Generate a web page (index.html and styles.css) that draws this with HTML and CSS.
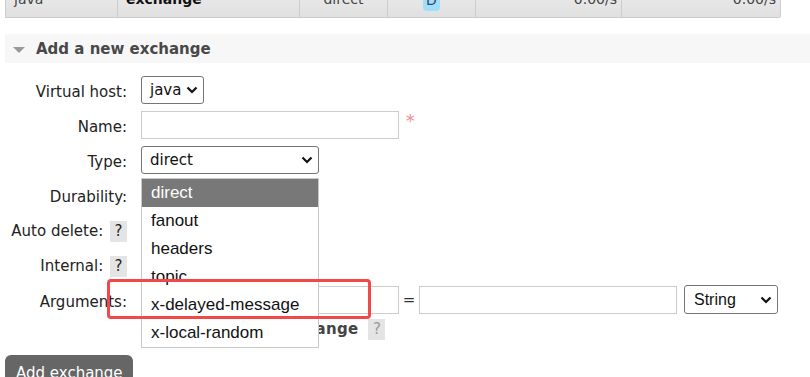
FILE: index.html
```html
<!DOCTYPE html>
<html>
<head>
    <title>Exchanges</title>
    <link rel="stylesheet" href="styles.css">
</head>
<body>
    <div class="list-row">
        <div class="cell c-vhost">java</div>
        <div class="cell c-name">exchange</div>
        <div class="cell c-type">direct</div>
        <div class="cell c-feat"><span class="badge">D</span></div>
        <div class="cell c-rate">0.00/s</div>
        <div class="cell c-rate">0.00/s</div>
    </div>

    <div class="section">
        <h2 class="section-head"><span class="toggle"></span>Add a new exchange</h2>

        <div class="form">
            <div class="form-row">
                <div class="label">Virtual host:</div>
                <div class="field">
                    <div class="select sel-vhost"><span>java</span>
                        <svg class="chev" width="12" height="8" viewBox="0 0 12 8"><path d="M1.5 1.5 L6 6 L10.5 1.5" /></svg>
                    </div>
                </div>
            </div>
            <div class="form-row">
                <div class="label">Name:</div>
                <div class="field">
                    <div class="input inp-wide"></div>
                    <span class="mand">*</span>
                </div>
            </div>
            <div class="form-row">
                <div class="label">Type:</div>
                <div class="field type-field">
                    <div class="select sel-type"><span>direct</span>
                        <svg class="chev" width="12" height="8" viewBox="0 0 12 8"><path d="M1.5 1.5 L6 6 L10.5 1.5" /></svg>
                    </div>
                    <ul class="dropdown">
                        <li class="selected">direct</li>
                        <li>fanout</li>
                        <li>headers</li>
                        <li>topic</li>
                        <li>x-delayed-message</li>
                        <li>x-local-random</li>
                    </ul>
                </div>
            </div>
            <div class="form-row">
                <div class="label">Durability:</div>
                <div class="field"></div>
            </div>
            <div class="form-row">
                <div class="label">Auto delete: <span class="help">?</span></div>
                <div class="field"></div>
            </div>
            <div class="form-row">
                <div class="label">Internal: <span class="help">?</span></div>
                <div class="field"></div>
            </div>
            <div class="form-row">
                <div class="label">Arguments:</div>
                <div class="field">
                    <div class="input inp-wide"></div>
                    <span class="eq">=</span>
                    <div class="input inp-wide"></div>
                    <div class="select sel-string"><span>String</span>
                        <svg class="chev" width="12" height="8" viewBox="0 0 12 8"><path d="M1.5 1.5 L6 6 L10.5 1.5" /></svg>
                    </div>
                </div>
            </div>
            <div class="form-row row-short">
                <div class="label"></div>
                <div class="field add-links">Add <b class="arg-link">Alternate exchange</b> <span class="help light">?</span></div>
            </div>
        </div>

        <div class="btn">Add exchange</div>
    </div>

    <div class="annotation"></div>
</body>
</html>
```

FILE: styles.css
```css
body { margin: 0; width: 810px; height: 377px; overflow: hidden; position: relative; background: #fff; font-family: "DejaVu Sans", Verdana, sans-serif; font-size: 14px; color: #222; }

/* exchange list, last row */
.list-row { display: grid; grid-template-columns: 112px 182px 88px 88px 146px 159px; height: 30px; margin: -12px 0 0 5px; width: 775px; border-left: 1px solid #ccc; border-bottom: 1px solid #ccc; background: linear-gradient(#ececec, #e0e0e0); box-sizing: border-box; }
.cell { border-right: 1px solid #ccc; line-height: 22px; color: #444; padding: 0 8px; white-space: nowrap; }
.c-name { font-weight: bold; color: #111; }
.c-type, .c-feat { text-align: center; }
.c-rate { text-align: right; padding-right: 4px; }
.badge { display: inline-block; background: #9ee0fa; color: #446; border-radius: 4px; padding: 0 3px; line-height: 21px; margin-top: 2px; }

/* section */
.section { margin-top: 16px; }
.section-head { margin: 0 0 0 5px; height: 29px; background: #f7f7f7; font-size: 15px; font-weight: bold; color: #484848; display: flex; align-items: center; padding-top: 1px; box-sizing: border-box; }
.toggle { width: 0; height: 0; border-left: 6px solid transparent; border-right: 6px solid transparent; border-top: 6px solid #999; margin: 2px 11px 0 8px; }

.form { padding-top: 9px; }
.form-row { display: flex; align-items: center; height: 35px; }
.form-row.row-short { height: 24px; }
.label { width: 127px; text-align: right; font-size: 15px; color: #222; padding-top: 4px; box-sizing: border-box; white-space: nowrap; }
.field { margin-left: 14px; display: flex; align-items: center; }
.type-field { position: relative; }

.select { box-sizing: border-box; height: 28px; border: 1px solid #767676; border-radius: 3px; display: flex; align-items: center; justify-content: space-between; padding: 0 5px 0 8px; font-family: "Liberation Sans", Arial, sans-serif; font-size: 16px; color: #111; background: #fff; }
.chev { fill: none; stroke: #111; stroke-width: 2.2; }
.sel-vhost { width: 63px; font-family: "DejaVu Sans", Verdana, sans-serif; font-size: 15px; }
.sel-type { width: 178px; font-family: "DejaVu Sans", Verdana, sans-serif; font-size: 15px; }
.sel-string { width: 94px; height: 29px; margin-left: 7px; padding-left: 9px; }

.input { box-sizing: border-box; height: 28px; border: 1px solid #ccc; background: #fff; }
.inp-wide { width: 258px; }
.mand { color: #f28a8a; font-size: 17px; margin-left: 7px; margin-top: -8px; }
.eq { color: #333; font-size: 15px; width: 20px; text-align: center; }

.help { display: inline-block; background: #e4e4e4; color: #222; width: 17px; height: 21px; line-height: 21px; text-align: center; font-size: 15px; margin-left: 2px; }
.help.light { color: #999; margin-left: 10px; }
.add-links { font-size: 15px; color: #444; padding-top: 0; }
.arg-link { color: #444; margin-left: 17px; letter-spacing: 0.3px; }

.dropdown { position: absolute; left: 0; top: calc(100% + 4px); width: 178px; margin: 0; padding: 0; list-style: none; box-sizing: border-box; border: 1px solid #c8c8c8; background: #fff; font-family: "Liberation Sans", Arial, sans-serif; font-size: 17px; color: #111; z-index: 2; }
.dropdown li { height: 28px; line-height: 28px; padding-left: 9px; }
.dropdown li.selected { background: #787878; color: #fff; }

.btn { display: inline-block; margin: 14px 0 0 5px; background: #666; color: #fff; border-radius: 6px; padding: 9px 10px 12px 11px; font-size: 15px; }

.annotation { position: absolute; left: 107px; top: 279px; width: 264px; height: 40px; box-sizing: border-box; border: 3px solid #f24848; border-radius: 4px; z-index: 3; }
```
